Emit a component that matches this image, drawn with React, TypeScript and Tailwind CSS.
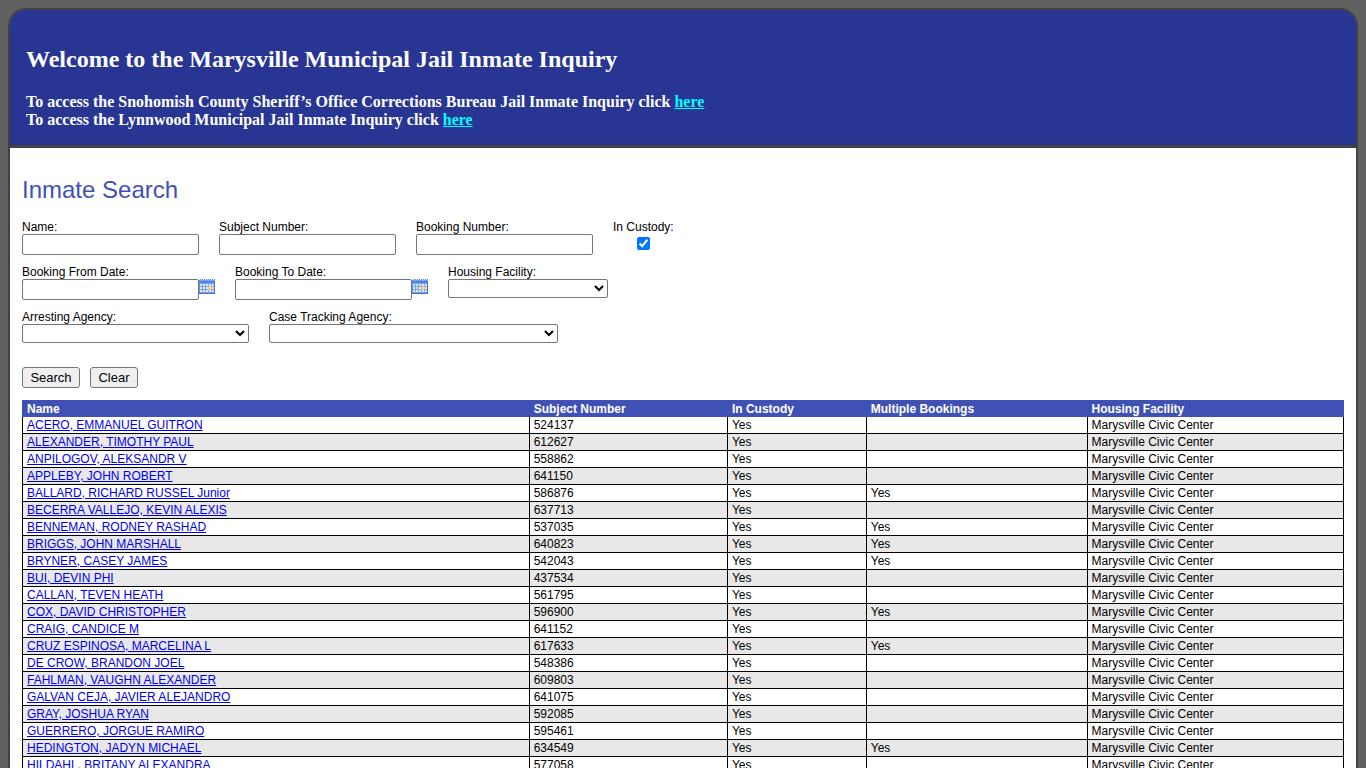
import React from 'react';

type Inmate = {
  name: string;
  subject: string;
  multiple?: boolean;
};

const inmates: Inmate[] = [
  { name: 'ACERO, EMMANUEL GUITRON', subject: '524137' },
  { name: 'ALEXANDER, TIMOTHY PAUL', subject: '612627' },
  { name: 'ANPILOGOV, ALEKSANDR V', subject: '558862' },
  { name: 'APPLEBY, JOHN ROBERT', subject: '641150' },
  { name: 'BALLARD, RICHARD RUSSEL Junior', subject: '586876', multiple: true },
  { name: 'BECERRA VALLEJO, KEVIN ALEXIS', subject: '637713' },
  { name: 'BENNEMAN, RODNEY RASHAD', subject: '537035', multiple: true },
  { name: 'BRIGGS, JOHN MARSHALL', subject: '640823', multiple: true },
  { name: 'BRYNER, CASEY JAMES', subject: '542043', multiple: true },
  { name: 'BUI, DEVIN PHI', subject: '437534' },
  { name: 'CALLAN, TEVEN HEATH', subject: '561795' },
  { name: 'COX, DAVID CHRISTOPHER', subject: '596900', multiple: true },
  { name: 'CRAIG, CANDICE M', subject: '641152' },
  { name: 'CRUZ ESPINOSA, MARCELINA L', subject: '617633', multiple: true },
  { name: 'DE CROW, BRANDON JOEL', subject: '548386' },
  { name: 'FAHLMAN, VAUGHN ALEXANDER', subject: '609803' },
  { name: 'GALVAN CEJA, JAVIER ALEJANDRO', subject: '641075' },
  { name: 'GRAY, JOSHUA RYAN', subject: '592085' },
  { name: 'GUERRERO, JORGUE RAMIRO', subject: '595461' },
  { name: 'HEDINGTON, JADYN MICHAEL', subject: '634549', multiple: true },
  { name: 'HILDAHL, BRITANY ALEXANDRA', subject: '577058' },
];

const columns = [
  { label: 'Name', width: 'w-[38.4%]' },
  { label: 'Subject Number', width: 'w-[15%]' },
  { label: 'In Custody', width: 'w-[10.5%]' },
  { label: 'Multiple Bookings', width: 'w-[16.7%]' },
  { label: 'Housing Facility', width: 'w-[19.4%]' },
];

const inputClass = 'h-[21px] w-[177px] rounded-[2px] border border-[#767676] bg-white px-px text-[13px]';
const selectClass = 'h-[19px] rounded-[2px] border border-[#767676] bg-white text-[13px]';
const buttonClass = 'h-[21px] rounded-[3px] border border-[#767676] bg-[#efefef] text-[13px] text-black';
const cellClass = 'h-[17px] border-r border-b border-black px-1 py-0 first:border-l';

const CalendarIcon: React.FC = () => (
  <svg width="16" height="15" viewBox="0 0 16 15" shapeRendering="crispEdges" aria-hidden="true">
    <rect width="16" height="15" fill="#5f90e6" />
    <path d="M0 .5h16" stroke="#dce8fb" strokeDasharray="1 1" />
    <path d="M0 1.5h16" stroke="#8fb4f2" strokeDasharray="1 1" strokeDashoffset="1" />
    <rect y="2" width="16" height="2" fill="#4f86e4" />
    <rect x="1" y="4" width="14" height="10" fill="#7fa6e6" />
    {[5, 8, 11].map((y) =>
      [1, 4, 7, 10, 13].map((x) => <rect key={`${x}-${y}`} x={x} y={y} width="2" height="2" fill="#dbe9fc" />),
    )}
    <rect x="9" y="7" width="4" height="4" fill="#e9bd8a" />
    <rect x="10" y="8" width="2" height="2" fill="#fad9a0" />
    <path d="M0 14.5h16M15.5 3v12" stroke="#4570c2" />
  </svg>
);

const Field: React.FC<{ id: string; label: string; children: React.ReactNode }> = ({ id, label, children }) => (
  <div className="flex flex-col items-start">
    <label htmlFor={id} className="leading-[14px]">
      {label}
    </label>
    {children}
  </div>
);

const TextField: React.FC<{ id: string; label: string }> = ({ id, label }) => (
  <Field id={id} label={label}>
    <input id={id} type="text" className={inputClass} />
  </Field>
);

const DateField: React.FC<{ id: string; label: string }> = ({ id, label }) => (
  <Field id={id} label={label}>
    <div className="flex items-start">
      <input id={id} type="text" className={inputClass} />
      <button type="button" aria-label="Open calendar">
        <CalendarIcon />
      </button>
    </div>
  </Field>
);

const Banner: React.FC = () => (
  <header className="rounded-t-2xl border-b-3 border-[#424242] bg-[#283593] px-4 pt-[35px] pb-4 font-['Liberation_Serif',serif] font-bold text-white">
    <h1 className="mb-5 text-2xl leading-7">Welcome to the Marysville Municipal Jail Inmate Inquiry</h1>
    <p className="text-base leading-[18px]">
      To access the Snohomish County Sheriff’s Office Corrections Bureau Jail Inmate Inquiry click{' '}
      <a href="#snohomish" className="text-[#00ffff] underline">
        here
      </a>
      <br />
      To access the Lynnwood Municipal Jail Inmate Inquiry click{' '}
      <a href="#lynnwood" className="text-[#00ffff] underline">
        here
      </a>
    </p>
  </header>
);

const SearchForm: React.FC = () => (
  <form onSubmit={(e) => e.preventDefault()}>
    <div className="flex flex-col gap-[10px]">
      <div className="flex flex-wrap items-start gap-x-5">
        <TextField id="name" label="Name:" />
        <TextField id="subject-number" label="Subject Number:" />
        <TextField id="booking-number" label="Booking Number:" />
        <div className="flex flex-col items-center">
          <label htmlFor="in-custody" className="leading-[14px]">
            In Custody:
          </label>
          <input id="in-custody" type="checkbox" defaultChecked className="mt-[3px] size-[13px]" />
        </div>
      </div>
      <div className="flex flex-wrap items-start gap-x-5">
        <DateField id="booking-from" label="Booking From Date:" />
        <DateField id="booking-to" label="Booking To Date:" />
        <Field id="housing" label="Housing Facility:">
          <select id="housing" className={`${selectClass} w-40`} />
        </Field>
      </div>
      <div className="flex flex-wrap items-start gap-x-5">
        <Field id="arresting" label="Arresting Agency:">
          <select id="arresting" className={`${selectClass} w-[227px]`} />
        </Field>
        <Field id="tracking" label="Case Tracking Agency:">
          <select id="tracking" className={`${selectClass} w-[289px]`} />
        </Field>
      </div>
    </div>
    <div className="mt-6 flex gap-[10px]">
      <button type="submit" className={`${buttonClass} w-[58px]`}>
        Search
      </button>
      <button type="reset" className={`${buttonClass} w-12`}>
        Clear
      </button>
    </div>
  </form>
);

const InmateTable: React.FC = () => (
  <table className="mt-3 w-full table-fixed border-separate border-spacing-0 text-left leading-4">
    <thead>
      <tr className="bg-[#3f51b5] text-white">
        {columns.map((col) => (
          <th
            key={col.label}
            className={`h-[17px] border-[#3f51b5] px-1 py-0 font-bold first:border-l ${col.width}`}
          >
            {col.label}
          </th>
        ))}
      </tr>
    </thead>
    <tbody>
      {inmates.map((inmate) => (
        <tr key={inmate.subject} className="even:bg-[#e8e8e8]">
          <td className={cellClass}>
            <a href={`#${inmate.subject}`} className="text-[#0000ee] underline">
              {inmate.name}
            </a>
          </td>
          <td className={cellClass}>{inmate.subject}</td>
          <td className={cellClass}>Yes</td>
          <td className={cellClass}>{inmate.multiple ? 'Yes' : ''}</td>
          <td className={cellClass}>Marysville Civic Center</td>
        </tr>
      ))}
    </tbody>
  </table>
);

const App: React.FC = () => {
  return (
    <div className="min-h-screen bg-[#616161] p-2 font-['Liberation_Sans',Arial,sans-serif] text-xs text-black">
      <div className="rounded-t-[18px] border-2 border-[#424242]">
        <Banner />
        <main className="bg-white px-3 pt-[26px] pb-3">
          <h2 className="mb-[14px] text-2xl text-[#3f51b5]">Inmate Search</h2>
          <SearchForm />
          <InmateTable />
        </main>
      </div>
    </div>
  );
};

export default App;
